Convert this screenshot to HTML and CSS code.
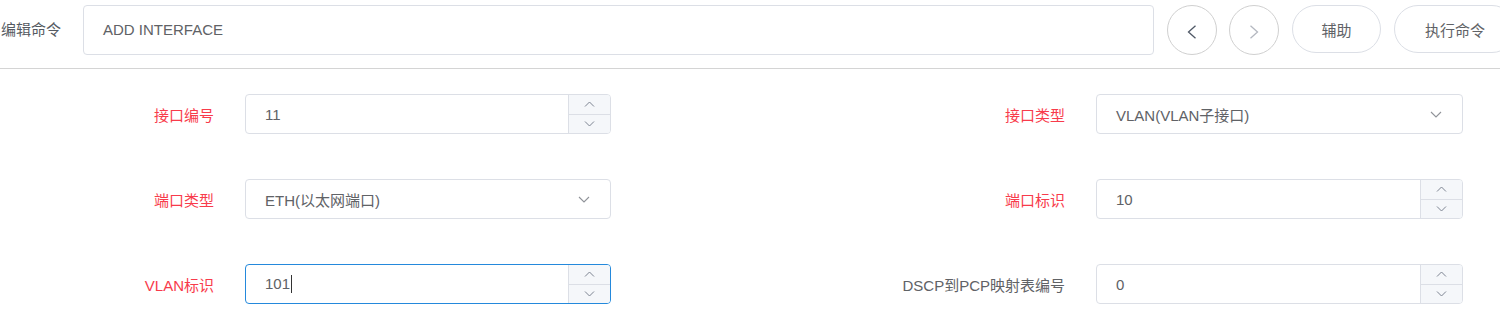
FILE: index.html
```html
<!DOCTYPE html>
<html lang="zh-CN">
<head>
<meta charset="utf-8">
<title>编辑命令</title>
<link rel="stylesheet" href="styles.css">
</head>
<body>
<header class="cmd-bar">
  <div class="cmd-label">编辑命令</div>
  <div class="cmd-input">ADD INTERFACE</div>
  <button class="circle-btn prev" type="button" aria-label="上一条">
    <svg width="10" height="14" viewBox="0 0 10 14"><polyline points="8.5,0.8 1.5,7 8.5,13.2" fill="none" stroke="currentColor" stroke-width="1.3"/></svg>
  </button>
  <button class="circle-btn next" type="button" aria-label="下一条">
    <svg width="10" height="14" viewBox="0 0 10 14"><polyline points="1.5,0.8 8.5,7 1.5,13.2" fill="none" stroke="currentColor" stroke-width="1.3"/></svg>
  </button>
  <button class="pill-btn assist" type="button">辅助</button>
  <button class="pill-btn exec" type="button">执行命令</button>
</header>

<main class="form-grid">
  <label class="form-label required">接口编号</label>
  <div class="field">
    <span class="field-value">11</span>
    <div class="spinner">
      <span class="spin-btn"><svg width="11" height="6" viewBox="0 0 11 6"><polyline points="1,5.5 5.5,1 10,5.5" fill="none" stroke="currentColor" stroke-width="1"/></svg></span>
      <span class="spin-btn"><svg width="11" height="6" viewBox="0 0 11 6"><polyline points="1,0.5 5.5,5 10,0.5" fill="none" stroke="currentColor" stroke-width="1"/></svg></span>
    </div>
  </div>
  <label class="form-label required">接口类型</label>
  <div class="field select">
    <span class="field-value">VLAN(VLAN子接口)</span>
    <svg class="select-arrow" width="12" height="7" viewBox="0 0 12 7"><polyline points="1,1 6,6 11,1" fill="none" stroke="currentColor" stroke-width="1.1"/></svg>
  </div>

  <label class="form-label required">端口类型</label>
  <div class="field select">
    <span class="field-value">ETH(以太网端口)</span>
    <svg class="select-arrow" width="12" height="7" viewBox="0 0 12 7"><polyline points="1,1 6,6 11,1" fill="none" stroke="currentColor" stroke-width="1.1"/></svg>
  </div>
  <label class="form-label required">端口标识</label>
  <div class="field">
    <span class="field-value">10</span>
    <div class="spinner">
      <span class="spin-btn"><svg width="11" height="6" viewBox="0 0 11 6"><polyline points="1,5.5 5.5,1 10,5.5" fill="none" stroke="currentColor" stroke-width="1"/></svg></span>
      <span class="spin-btn"><svg width="11" height="6" viewBox="0 0 11 6"><polyline points="1,0.5 5.5,5 10,0.5" fill="none" stroke="currentColor" stroke-width="1"/></svg></span>
    </div>
  </div>

  <label class="form-label required">VLAN标识</label>
  <div class="field focused">
    <span class="field-value">101<span class="caret"></span></span>
    <div class="spinner">
      <span class="spin-btn"><svg width="11" height="6" viewBox="0 0 11 6"><polyline points="1,5.5 5.5,1 10,5.5" fill="none" stroke="currentColor" stroke-width="1"/></svg></span>
      <span class="spin-btn"><svg width="11" height="6" viewBox="0 0 11 6"><polyline points="1,0.5 5.5,5 10,0.5" fill="none" stroke="currentColor" stroke-width="1"/></svg></span>
    </div>
  </div>
  <label class="form-label">DSCP到PCP映射表编号</label>
  <div class="field">
    <span class="field-value">0</span>
    <div class="spinner">
      <span class="spin-btn"><svg width="11" height="6" viewBox="0 0 11 6"><polyline points="1,5.5 5.5,1 10,5.5" fill="none" stroke="currentColor" stroke-width="1"/></svg></span>
      <span class="spin-btn"><svg width="11" height="6" viewBox="0 0 11 6"><polyline points="1,0.5 5.5,5 10,0.5" fill="none" stroke="currentColor" stroke-width="1"/></svg></span>
    </div>
  </div>
</main>
</body>
</html>
```

FILE: styles.css
```css
html, body {
  margin: 0;
  padding: 0;
  background: #ffffff;
  overflow: hidden;
}

body {
  font-family: "Liberation Sans", Arial, "Noto Sans CJK SC", sans-serif;
  font-size: 15px;
  color: #606266;
}

.cmd-bar {
  display: flex;
  align-items: flex-start;
  padding: 5px 0 13px 0;
  border-bottom: 1px solid #d4d4d4;
  overflow: hidden;
  white-space: nowrap;
}

.cmd-label {
  flex: 0 0 82px;
  padding-left: 1px;
  line-height: 50px;
  color: #555a62;
}

.cmd-input {
  flex: 0 0 1071px;
  box-sizing: border-box;
  height: 50px;
  line-height: 48px;
  padding-left: 19px;
  border: 1px solid #dcdfe6;
  border-radius: 4px;
  color: #606266;
}

.circle-btn {
  flex: 0 0 50px;
  width: 50px;
  height: 50px;
  box-sizing: border-box;
  padding: 4px 0 0 0;
  border: 1px solid #d0d0d0;
  border-radius: 50%;
  background: #fff;
  display: flex;
  align-items: center;
  justify-content: center;
}

.circle-btn.prev {
  margin-left: 13px;
  color: #4f5866;
}

.circle-btn.next {
  margin-left: 12px;
  color: #b4b8c0;
}

.pill-btn {
  flex: 0 0 auto;
  box-sizing: border-box;
  height: 48px;
  margin-left: 13px;
  padding: 0 30px;
  border: 1px solid #dcdfe6;
  border-radius: 24px;
  background: #fff;
  font-family: inherit;
  font-size: 15px;
  color: #606266;
}

.pill-btn.assist {
  width: 89px;
  padding: 0;
}

.form-grid {
  display: grid;
  grid-template-columns: 245px 366px 1fr 367px;
  grid-auto-rows: 40px;
  row-gap: 45px;
  padding: 25px 37px 0 0;
}

.form-label {
  display: flex;
  align-items: center;
  justify-content: flex-end;
  padding-right: 31px;
  color: #606266;
}

.form-label.required {
  color: #f83b4b;
}

.field {
  box-sizing: border-box;
  height: 40px;
  display: flex;
  align-items: center;
  border: 1px solid #dcdfe6;
  border-radius: 4px;
  background: #fff;
}

.field.focused {
  border-color: #2489dc;
}

.field-value {
  flex: 1;
  padding-left: 19px;
  color: #606266;
  white-space: nowrap;
}

.caret {
  display: inline-block;
  width: 1px;
  height: 18px;
  margin-left: 1px;
  background: #333;
  vertical-align: -4px;
}

.select-arrow {
  margin-right: 20px;
  color: #909399;
}

.spinner {
  align-self: stretch;
  width: 41px;
  display: flex;
  flex-direction: column;
  border-left: 1px solid #dcdfe6;
  background: #f5f7fa;
  border-radius: 0 3px 3px 0;
  color: #7c8391;
}

.spin-btn {
  flex: 1;
  display: flex;
  align-items: center;
  justify-content: center;
}

.spin-btn + .spin-btn {
  border-top: 1px solid #dcdfe6;
}
```
